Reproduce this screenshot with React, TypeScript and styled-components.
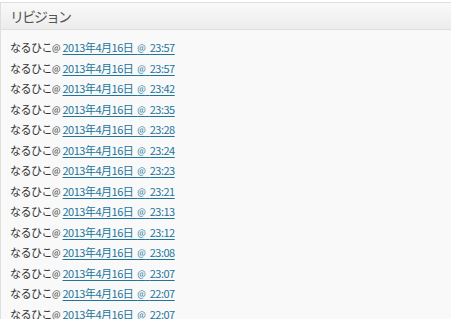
import styled, { createGlobalStyle } from "styled-components";

const GlobalStyle = createGlobalStyle`
  html, body {
    margin: 0;
    padding: 0;
    background: #fff;
  }
  body {
    font-family: "Noto Sans CJK JP", "DejaVu Sans", sans-serif;
  }
`;

const Page = styled.div`
  padding-top: 2px;
  width: 451px;
`;

const Postbox = styled.div`
  border: 1px solid #dfdfdf;
  border-right: none;
  background: #f9f9f9;
  box-shadow: inset 0 1px 0 #fff;
`;

const Header = styled.h3`
  margin: 0;
  height: 26px;
  padding: 0 9px;
  display: flex;
  align-items: center;
  font-size: 14px;
  font-weight: 400;
  color: #555;
  background: linear-gradient(to bottom, #f9f9f9, #ececec);
  border-bottom: 1px solid #dfdfdf;
  letter-spacing: -2px;
`;

const RevisionList = styled.ul`
  list-style: none;
  margin: 0;
  padding: 7px 9px 0;
`;

const Revision = styled.li`
  height: 20.5px;
  display: flex;
  align-items: center;
  font-size: 11px;
  color: #333;
  white-space: nowrap;
`;

const Author = styled.span`
  margin-right: 2px;
  letter-spacing: -0.5px;
`;

const At = styled.span`
  font-size: 9px;
  letter-spacing: 0;
  vertical-align: 1px;
`;

const RevLink = styled.a`
  color: #21759b;
  text-decoration: underline;
  text-underline-offset: 2px;
  letter-spacing: -0.5px;
  word-spacing: 2px;
`;

const revisions = [
  "23:57",
  "23:57",
  "23:42",
  "23:35",
  "23:28",
  "23:24",
  "23:23",
  "23:21",
  "23:13",
  "23:12",
  "23:08",
  "23:07",
  "22:07",
  "22:07",
];

export default function App() {
  return (
    <>
      <GlobalStyle />
      <Page>
        <Postbox>
          <Header>リビジョン</Header>
          <RevisionList>
            {revisions.map((time, i) => (
              <Revision key={i}>
                <Author>
                  なるひこ<At>@</At>
                </Author>
                <RevLink href="#">
                  2013年4月16日 <At>@</At> {time}
                </RevLink>
              </Revision>
            ))}
          </RevisionList>
        </Postbox>
      </Page>
    </>
  );
}
